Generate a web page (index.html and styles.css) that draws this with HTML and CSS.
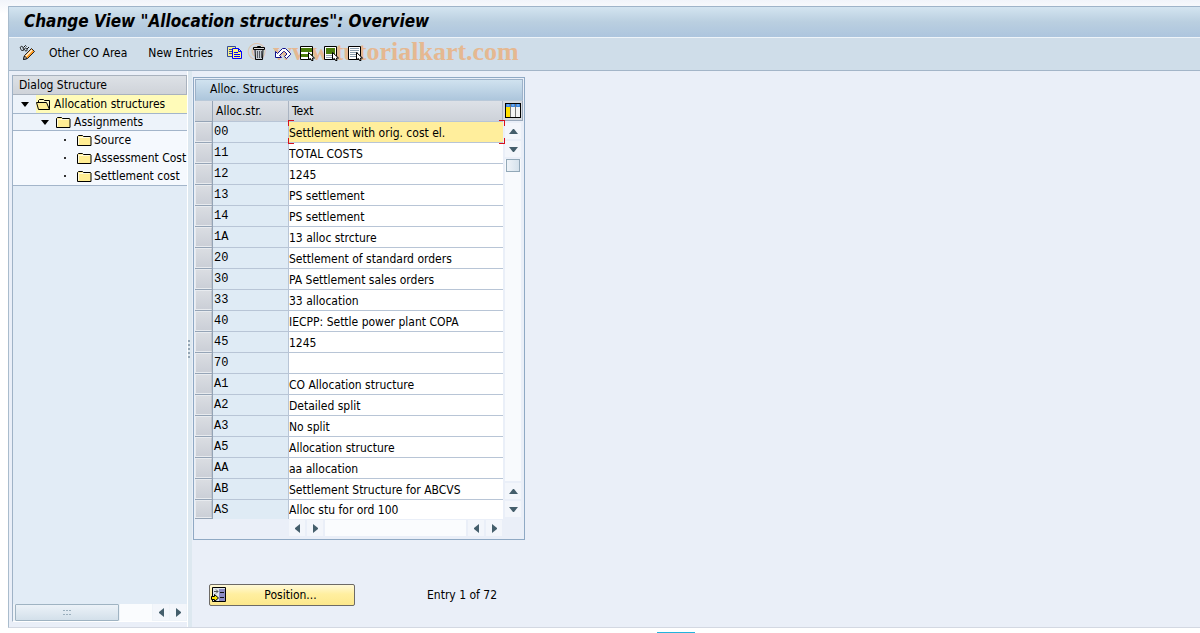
FILE: index.html
```html
<!DOCTYPE html>
<html lang="en">
<head>
<meta charset="utf-8">
<title>Change View "Allocation structures": Overview</title>
<link rel="stylesheet" href="styles.css">
</head>
<body>
<svg class="defs" width="0" height="0" aria-hidden="true">
  <symbol id="folder" viewBox="0 0 15 13"><path d="M.5 11.500v-9l1-1h4l1 1h7l.5.5v8.500z" fill="#ffed94" stroke="#000"/><path d="M1.500 10.500v-7h11" fill="none" stroke="#fffbe0"/></symbol>
  <symbol id="folder-open" viewBox="0 0 15 13"><path d="M2.500 4.500v-2l1-1h4l1 1h5v9" fill="#fff8c8" stroke="#000"/><path d="M.5 4.500h10l3 7h-11z" fill="#ffed94" stroke="#000"/></symbol>
  <symbol id="up" viewBox="0 0 9 5"><path d="M0 5l4-5h1l4 5z" fill="#445e6b"/></symbol>
  <symbol id="down" viewBox="0 0 9 5"><path d="M0 0l4 5h1l4-5z" fill="#445e6b"/></symbol>
  <symbol id="left" viewBox="0 0 5 9"><path d="M5 0L0 4v1l5 4z" fill="#445e6b"/></symbol>
  <symbol id="right" viewBox="0 0 5 9"><path d="M0 0l5 4v1L0 9z" fill="#445e6b"/></symbol>
  <symbol id="pointer" viewBox="0 0 7 9"><path d="M.5.5v7l2-1 1 2h1.500l-.5-2.500h2z" fill="#fff" stroke="#000"/></symbol>
</svg>
<main class="window">
  <header class="titlebar"><h1>Change View "Allocation structures": Overview</h1></header>
  <div class="toolbar" role="toolbar" aria-label="Application">
    <div class="watermark"><span class="copy">©</span> www.tutorialkart.com</div>
    <button class="tool glasses" aria-label="Display / Change"><svg width="17" height="16" viewBox="0 0 17 16"><path d="M1.500 3.500c-1-2 2-3 2.500-1s1 3 0 3-2 0-2.500-2M5.500 4.500c0-2 2-2 2.500 0s-2 2-2.500 0M4.500 2.500l2-2 1 1M8 4l2-2" fill="none" stroke="#111"/><path d="M4.500 14.500l1-4 7-7 3 3-7 7z" fill="#ff9b22" stroke="#222"/><path d="M6.500 11.500l6.500-6.500" stroke="#fff3d8" stroke-width="1.500"/><path d="M4.500 14.500l1-3.500 2.500 2.500z" fill="#fff" stroke="#111"/></svg></button>
    <button class="tool text area">Other CO Area</button>
    <button class="tool text entries">New Entries</button>
    <div class="icons">
      <button class="tool" aria-label="Copy As"><svg width="16" height="16" viewBox="0 0 16 16"><path d="M.5 1.500h8v10h-8z" fill="#f6ee8a" stroke="#334b99"/><path d="M2 4.500h3M2 6.500h3M2 8.500h3" stroke="#334b99"/><path d="M5.500 3.500h6l3 3v7h-9z" fill="#fff780" stroke="#00f"/><path d="M11.500 3.500v3h3M7 7.500h4M7 9.500h6M7 11.500h6" fill="none" stroke="#00f"/></svg></button>
      <button class="tool" aria-label="Delete"><svg width="16" height="16" viewBox="0 0 16 16"><path d="M4 4.500h8l-.5 10h-7z" fill="#c6ccd2" stroke="#000"/><path d="M2.500 2.500h11v2h-11zM6.500 2.500v-1h3v1" fill="#d8d8d8" stroke="#000"/><path d="M6.500 6v7M8.500 6v7M10.500 6v7" stroke="#555a62"/></svg></button>
      <button class="tool undo" aria-label="Undo Change"><svg width="16" height="16" viewBox="0 0 16 16"><path d="M.5 12.500v-6l2 2 5-5h3l5 5v1l-4 4-2-2 2.500-2.500-2.500-2.500h-1l-4 4 2 2z" fill="#fff" stroke="#11118c"/></svg></button>
      <button class="tool" aria-label="Select All"><svg width="16" height="16" viewBox="0 0 16 16"><path d="M1.500 1.500h12v13h-12z" fill="#fff" stroke="#000"/><path d="M2 3h11v4H2zM2 9h11v3H2z" fill="#4b7c0b"/><use href="#pointer" x="9" y="7" width="7" height="9"/></svg></button>
      <button class="tool" aria-label="Select Block"><svg width="16" height="16" viewBox="0 0 16 16"><path d="M1.500 1.500h12v13h-12z" fill="#fff" stroke="#000"/><path d="M3 3h9v6H3z" fill="#4b7c0b"/><path d="M3 10.500h8M3 12.500h6" stroke="#9aa7b3"/><use href="#pointer" x="9" y="7" width="7" height="9"/></svg></button>
      <button class="tool" aria-label="Deselect All"><svg width="16" height="16" viewBox="0 0 16 16"><path d="M1.500 1.500h12v13h-12z" fill="#fff" stroke="#000"/><path d="M3 3.500h9M3 5.500h9M3 7.500h8M3 9.500h7M3 11.500h7" stroke="#8a9dad"/><use href="#pointer" x="9" y="7" width="7" height="9"/></svg></button>
    </div>
  </div>
  <div class="work">
    <nav class="dialog" aria-label="Dialog Structure">
      <h2 class="panel-head">Dialog Structure</h2>
      <ul class="tree">
        <li class="selected"><svg class="twist" width="9" height="5" aria-hidden="true"><path d="M0 0h8L4 5z"/></svg><span class="node"><svg width="15" height="13"><use href="#folder-open"/></svg>Allocation structures</span></li>
        <li class="level2"><svg class="twist" width="9" height="5" aria-hidden="true"><path d="M0 0h8L4 5z"/></svg><span class="node"><svg width="15" height="13"><use href="#folder"/></svg>Assignments</span></li>
        <li class="level3"><i class="dot"></i><span class="node"><svg width="15" height="13"><use href="#folder"/></svg>Source</span></li>
        <li class="level3"><i class="dot"></i><span class="node"><svg width="15" height="13"><use href="#folder"/></svg>Assessment Cost</span></li>
        <li class="level3"><i class="dot"></i><span class="node"><svg width="15" height="13"><use href="#folder"/></svg>Settlement cost</span></li>
      </ul>
      <div class="tree-scroll">
        <span class="thumb"><svg width="9" height="5" aria-hidden="true"><path d="M0 .5h2M3 .5h2M6 .5h2M0 4.500h2M3 4.500h2M6 4.500h2" stroke="#9aafbd"/></svg></span>
        <span class="track"></span>
        <button class="arrow" aria-label="Scroll left"><svg width="5" height="9"><use href="#left"/></svg></button>
        <button class="arrow" aria-label="Scroll right"><svg width="5" height="9"><use href="#right"/></svg></button>
      </div>
    </nav>
    <div class="splitter"><i></i><i></i><i></i><i></i><i></i></div>
    <section class="detail">
      <div class="grid-box">
        <h2 class="grid-title">Alloc. Structures</h2>
        <div class="grid-body">
          <table class="grid">
            <thead><tr><th class="sel"></th><th class="code">Alloc.str.</th><th class="desc">Text</th></tr></thead>
            <tbody>
              <tr class="current"><td class="sel"><button aria-label="Select 00"></button></td><td class="code">00</td><td class="desc"><input aria-label="Text 00" value="Settlement with orig. cost el."><i class="corner tl"></i><i class="corner tr"></i><i class="corner bl"></i><i class="corner br"></i></td></tr>
              <tr><td class="sel"><button aria-label="Select 11"></button></td><td class="code">11</td><td class="desc"><input aria-label="Text 11" value="TOTAL COSTS"></td></tr>
              <tr><td class="sel"><button aria-label="Select 12"></button></td><td class="code">12</td><td class="desc"><input aria-label="Text 12" value="1245"></td></tr>
              <tr><td class="sel"><button aria-label="Select 13"></button></td><td class="code">13</td><td class="desc"><input aria-label="Text 13" value="PS settlement"></td></tr>
              <tr><td class="sel"><button aria-label="Select 14"></button></td><td class="code">14</td><td class="desc"><input aria-label="Text 14" value="PS settlement"></td></tr>
              <tr><td class="sel"><button aria-label="Select 1A"></button></td><td class="code">1A</td><td class="desc"><input aria-label="Text 1A" value="13 alloc strcture"></td></tr>
              <tr><td class="sel"><button aria-label="Select 20"></button></td><td class="code">20</td><td class="desc"><input aria-label="Text 20" value="Settlement of standard orders"></td></tr>
              <tr><td class="sel"><button aria-label="Select 30"></button></td><td class="code">30</td><td class="desc"><input aria-label="Text 30" value="PA Settlement sales orders"></td></tr>
              <tr><td class="sel"><button aria-label="Select 33"></button></td><td class="code">33</td><td class="desc"><input aria-label="Text 33" value="33 allocation"></td></tr>
              <tr><td class="sel"><button aria-label="Select 40"></button></td><td class="code">40</td><td class="desc"><input aria-label="Text 40" value="IECPP: Settle power plant COPA"></td></tr>
              <tr><td class="sel"><button aria-label="Select 45"></button></td><td class="code">45</td><td class="desc"><input aria-label="Text 45" value="1245"></td></tr>
              <tr><td class="sel"><button aria-label="Select 70"></button></td><td class="code">70</td><td class="desc"><input aria-label="Text 70" value=""></td></tr>
              <tr><td class="sel"><button aria-label="Select A1"></button></td><td class="code">A1</td><td class="desc"><input aria-label="Text A1" value="CO Allocation structure"></td></tr>
              <tr><td class="sel"><button aria-label="Select A2"></button></td><td class="code">A2</td><td class="desc"><input aria-label="Text A2" value="Detailed split"></td></tr>
              <tr><td class="sel"><button aria-label="Select A3"></button></td><td class="code">A3</td><td class="desc"><input aria-label="Text A3" value="No split"></td></tr>
              <tr><td class="sel"><button aria-label="Select A5"></button></td><td class="code">A5</td><td class="desc"><input aria-label="Text A5" value="Allocation structure"></td></tr>
              <tr><td class="sel"><button aria-label="Select AA"></button></td><td class="code">AA</td><td class="desc"><input aria-label="Text AA" value="aa allocation"></td></tr>
              <tr><td class="sel"><button aria-label="Select AB"></button></td><td class="code">AB</td><td class="desc"><input aria-label="Text AB" value="Settlement Structure for ABCVS"></td></tr>
              <tr class="last"><td class="sel"><button aria-label="Select AS"></button></td><td class="code">AS</td><td class="desc"><input aria-label="Text AS" value="Alloc stu for ord 100"></td></tr>
            </tbody>
          </table>
          <div class="vscroll">
            <button class="config" aria-label="Table settings"><svg width="16" height="15" viewBox="0 0 16 15"><path d="M0 0h16v15H0z"/><path d="M1 1h14v3H1z" fill="#3f86dc"/><path d="M1 4h4v10H1z" fill="#ffe000"/><path d="M6 4h4v10H6zM11 4h4v10h-4z" fill="#f4f4f4"/><path d="M5.500 1v13M10.500 1v13" stroke="#777"/><path d="M2 2h2M7 2h2M12 2h2" stroke="#8fc3ff"/></svg></button>
            <button class="arrow" aria-label="Row up"><svg width="9" height="5"><use href="#up"/></svg></button>
            <button class="arrow" aria-label="Row down"><svg width="9" height="5"><use href="#down"/></svg></button>
            <div class="vtrack"><span class="vthumb"></span></div>
            <button class="arrow" aria-label="Page up"><svg width="9" height="5"><use href="#up"/></svg></button>
            <button class="arrow" aria-label="Page down"><svg width="9" height="5"><use href="#down"/></svg></button>
          </div>
        </div>
        <div class="hscroll">
          <button class="arrow" aria-label="Column left"><svg width="5" height="9"><use href="#left"/></svg></button>
          <button class="arrow" aria-label="Column right"><svg width="5" height="9"><use href="#right"/></svg></button>
          <span class="track"></span>
          <button class="arrow" aria-label="Page left"><svg width="5" height="9"><use href="#left"/></svg></button>
          <button class="arrow" aria-label="Page right"><svg width="5" height="9"><use href="#right"/></svg></button>
        </div>
      </div>
      <div class="footer">
        <button class="position"><svg width="16" height="16" viewBox="0 0 16 16" aria-hidden="true"><path d="M1.500.5h13v14h-13z" fill="#dfe6ec" stroke="#000"/><path d="M8 2h6v12H8z" fill="#8c8cc4"/><path d="M9 5.500h4M9 10.500h4" stroke="#111"/><path d="M3 4.500h4M5 2.500l2 2-2 2" fill="none" stroke="#555"/><path d="M.5 9.500h3v-2l4 3.500-4 3.500v-2h-3z" fill="#ffe600" stroke="#000"/></svg><span>Position...</span></button>
        <span class="entry">Entry 1 of 72</span>
      </div>
    </section>
  </div>
</main>
<div class="below"><i></i></div>
</body>
</html>
```
FILE: styles.css
```css
* { box-sizing: border-box; }
body {
  margin: 0;
  height: 100vh;
  display: flex;
  flex-direction: column;
  padding: 6px 0 0 8px;
  background: linear-gradient(#f1f4fa, #ffffff 14px);
  color: #000;
  font-family: "DejaVu Sans Condensed", "DejaVu Sans", sans-serif;
  font-size: 12px;
  line-height: 18px;
}
h1, h2, ul { margin: 0; padding: 0; font-weight: normal; }
svg { display: block; flex: none; }
button, input {
  font: inherit;
  color: inherit;
  border: 0;
  padding: 0;
  margin: 0;
  background: none;
}
.defs { position: absolute; }
.window {
  flex: 1;
  min-height: 0;
  display: flex;
  flex-direction: column;
  border-left: 1px solid #a9bccd;
  border-bottom: 1px solid #d3d8e2;
  background: #eaeff8;
}
.titlebar {
  border-top: 1px solid #9fb4c9;
  background: linear-gradient(#d3e4f0, #bacfe0 50%, #adc5de);
  padding: 2px 15px 4px;
}
.titlebar h1 {
  font-size: 17px;
  line-height: 24px;
  font-weight: bold;
  font-style: italic;
}
.toolbar {
  position: relative;
  display: flex;
  align-items: center;
  height: 34px;
  padding: 0 10px 2px;
  border-top: 1px solid #eef4f9;
  border-bottom: 1px solid #a3b5c8;
  background: #cfdde9;
}
.tool { position: relative; }
.area { margin-left: 13px; }
.entries { margin-left: 21px; }
.icons { display: flex; gap: 8px; margin-left: 14px; }
.watermark {
  position: absolute;
  left: 238px;
  top: 0;
  font: bold 26px/28px "Liberation Serif", serif;
  color: #e5b891;
  white-space: nowrap;
}
.copy { font-weight: normal; opacity: .7; }
.work { flex: 1; min-height: 0; display: flex; }
.dialog {
  width: 175px;
  margin: 4px 0 5px 3px;
  display: flex;
  flex-direction: column;
  border-left: 1px solid #9fb2c6;
  border-bottom: 1px solid #fff;
  background: #e2ecf6;
}
.panel-head {
  font-size: 12px;
  line-height: 18px;
  padding: 0 6px;
  border: 1px solid #a9b2be;
  border-left: 0;
  background: linear-gradient(#dde1e6, #cfd3d9);
}
.tree { list-style: none; background: #f5f9fe; border-bottom: 1px solid #a3b5ca; }
.tree li { height: 18px; display: flex; align-items: center; overflow: hidden; white-space: nowrap; padding-left: 8px; }
.tree .level2 { padding-left: 28px; border-top: 1px solid #a3b5ca; border-bottom: 1px solid #a3b5ca; background: #edf3fa; }
.tree .level3 { padding-left: 51px; }
.twist { margin-right: 6px; }
.node { flex: 1; display: flex; align-items: center; gap: 3px; height: 18px; }
.level3 .node { gap: 2px; }
.selected { background: #edf3fa; }
.selected .node { background: #fffbb9; }
.dot { width: 2px; height: 2px; background: #333; margin-right: 11px; flex: none; }
.tree-scroll { margin-top: auto; height: 17px; display: flex; gap: 1px; padding: 0 1px 0 2px; background: #eef3f8; }
.thumb {
  width: 104px;
  display: flex;
  align-items: center;
  justify-content: center;
  border: 1px solid #9fb3c2;
  border-radius: 1px;
  background: linear-gradient(#ecf2f8, #d3e0ea);
}
.track { flex: 1; background: #fafcfe; }
.arrow {
  width: 16px;
  height: 16px;
  display: flex;
  align-items: center;
  justify-content: center;
  background: #f3f6fb;
}
.splitter {
  width: 5px;
  border-left: 1px solid #fff;
  background: #dde8f0;
  display: flex;
  flex-direction: column;
  align-items: flex-start;
  justify-content: center;
  gap: 2px;
}
.splitter i { width: 2px; height: 2px; background: #93a5b4; }
.detail { flex: 1; padding: 6px 0 0 1px; }
.grid-box { width: 332px; border: 1px solid #8fa9c4; padding: 1px; }
.grid-title {
  font-size: 12px;
  line-height: 18px;
  padding: 0 14px 2px;
  border: 1px solid #9db2c9;
  border-bottom-color: #b9c9d9;
  background: linear-gradient(#d0e2ef, #adc6dc);
}
.grid-body { display: flex; }
.grid { flex: 1; table-layout: fixed; border-collapse: separate; border-spacing: 0; }
.grid th {
  height: 20px;
  padding: 0 3px;
  text-align: left;
  font-weight: normal;
  border-right: 1px solid #aab4c2;
  background: linear-gradient(#dde1e7, #cdd2d9);
}
.grid td { height: 21px; padding: 0; border-top: 1px solid #b8c5d6; }
.grid .sel { width: 18px; border-right: 1px solid #95a4b6; }
.grid td.sel { border-top-color: #95a4b6; background: #d2d6dd; }
.sel button { display: block; width: 100%; height: 20px; border: 1px solid #e8ebef; border-right-color: #bfc4cc; background: linear-gradient(#dadde2, #cbcfd7); }
.grid .code { width: 76px; }
.grid td.code { font: 12px/20px "Liberation Mono", monospace; padding-left: 1px; border-right: 1px solid #b8c5d6; background: #dfebf5; }
.grid td.desc { position: relative; background: #fff; }
.desc input { display: block; width: 100%; height: 20px; padding-top: 1px; outline: 0; }
.grid .current .desc { background: #ffee9c; }
.last .sel button, .last .desc input { height: 18px; }
.grid .last td { height: 19px; line-height: 18px; }
.grid .last .sel { border-bottom: 1px solid #95a4b6; }
.corner { position: absolute; width: 6px; height: 6px; border: 0 solid #d8101c; }
.tl { left: -1px; top: -2px; border-width: 1px 0 0 1px; }
.tr { right: -2px; top: -2px; border-width: 1px 1px 0 0; }
.bl { left: -1px; bottom: -2px; border-width: 0 0 1px 1px; }
.br { right: -2px; bottom: -2px; border-width: 0 1px 1px 0; }
.current .corner { z-index: 1; border-color: #d8101c; background: none; }
.vscroll { width: 20px; padding-bottom: 2px; display: flex; flex-direction: column; align-items: center; gap: 2px; }
.config { width: 20px; height: 20px; display: flex; align-items: center; justify-content: center; background: #d5d9df; border-right: 1px solid #9aa9bb; border-bottom: 1px solid #9aa9bb; }
.vtrack { flex: 1; width: 16px; background: #f8fafd; }
.vthumb { display: block; width: 14px; height: 13px; margin: 0 1px; border: 1px solid #92a8b8; background: linear-gradient(90deg, #eef3f8, #d5e2ec); }
.hscroll { display: flex; gap: 2px; padding: 1px 21px 2px 94px; }
.footer { display: flex; align-items: center; gap: 72px; padding: 44px 0 0 16px; }
.position {
  width: 146px;
  height: 22px;
  padding-left: 1px;
  display: flex;
  align-items: center;
  border: 1px solid #6d6a66;
  border-radius: 2px;
  background: linear-gradient(#fff9d8, #ffefa0 45%, #fde88c);
}
.position span { flex: 1; text-align: center; }
.below { height: 5px; display: flex; align-items: flex-end; justify-content: center; background: #fff; padding-left: 144px; }
.below i { width: 38px; height: 1px; background: #23b3dd; }
```
